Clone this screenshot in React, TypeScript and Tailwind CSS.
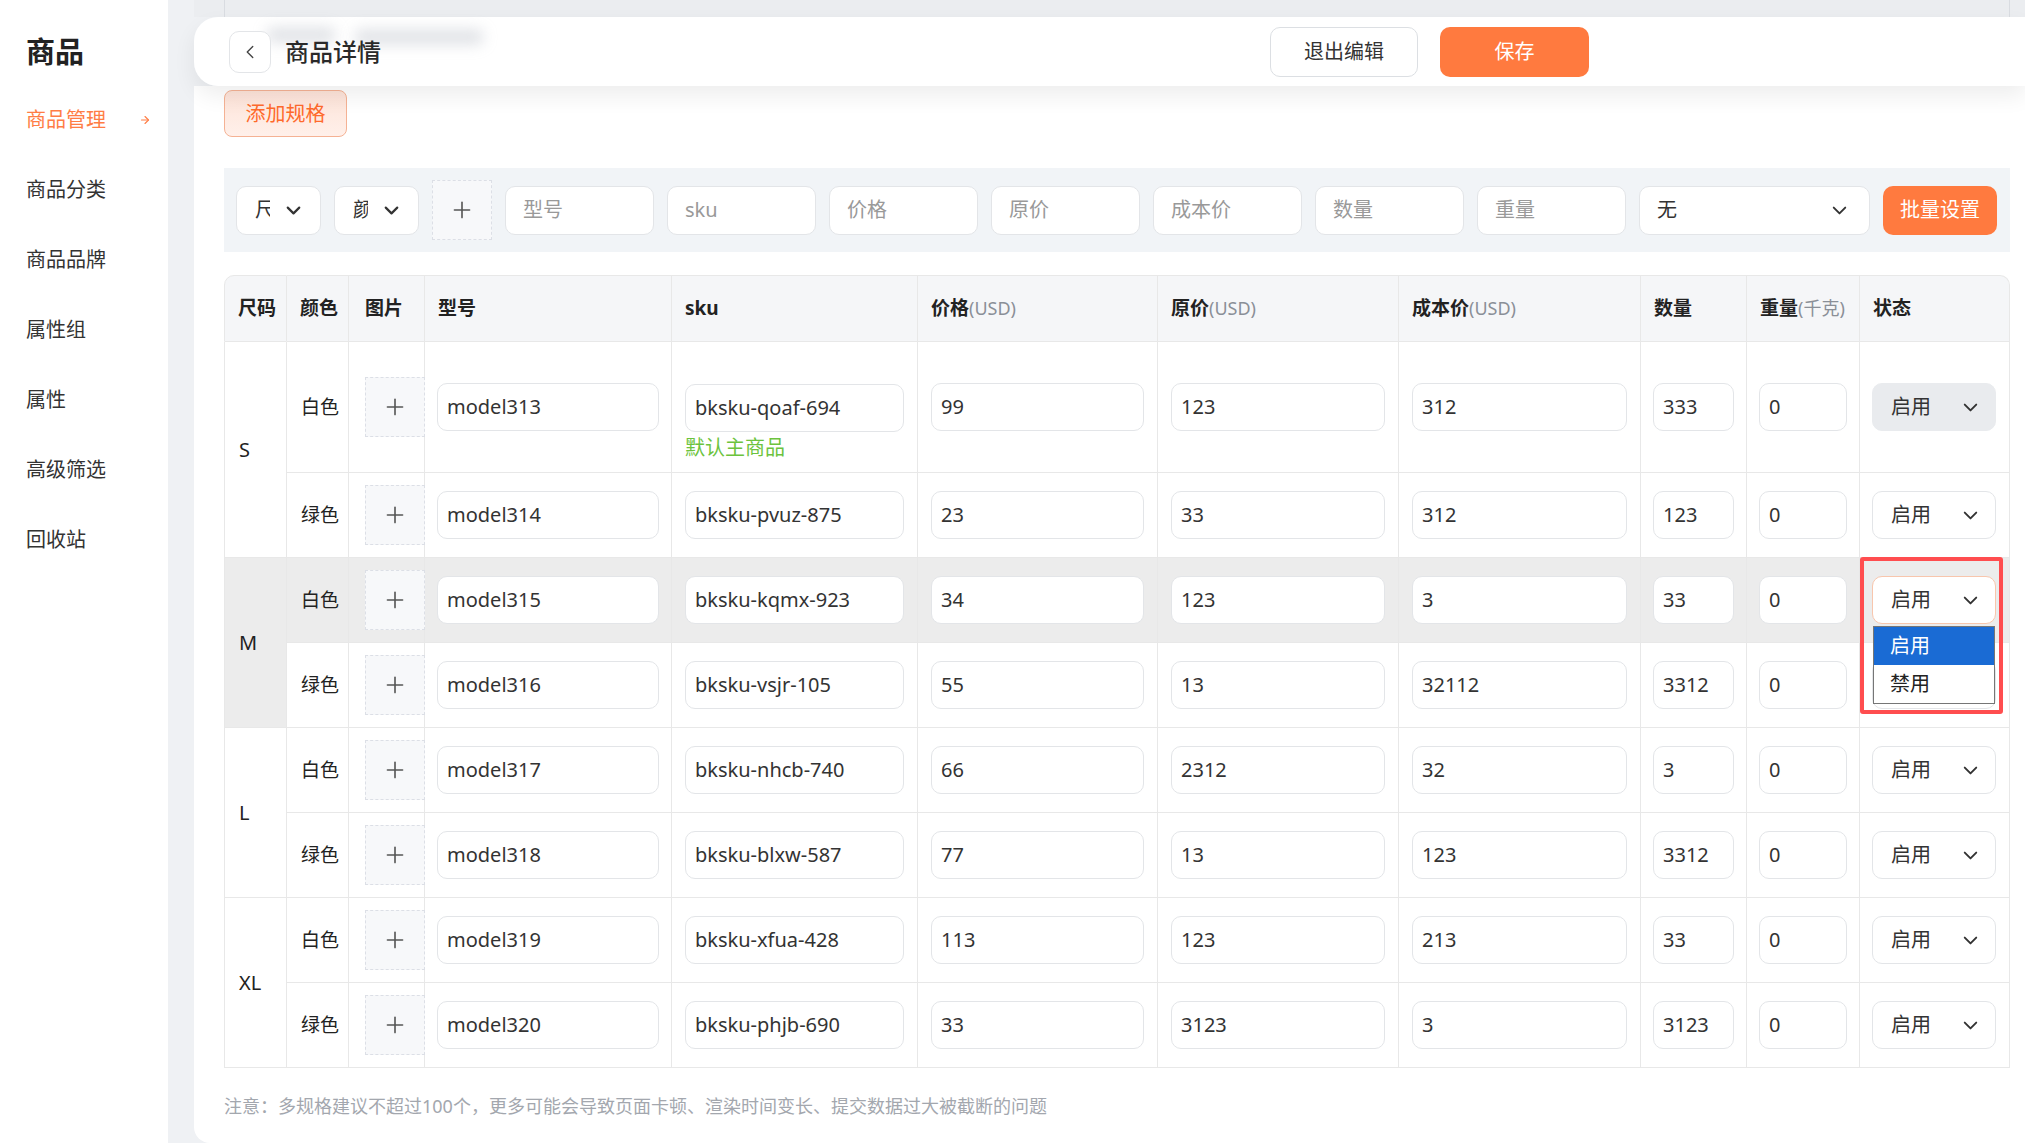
import React from 'react';
import { ChevronDown, ChevronLeft, Plus, ArrowRight } from 'lucide-react';

const menu = ['商品管理', '商品分类', '商品品牌', '属性组', '属性', '高级筛选', '回收站'];

type Row = {
  size: string;
  color: string;
  model: string;
  sku: string;
  price: string;
  origin: string;
  cost: string;
  qty: string;
  weight: string;
};

const rows: Row[] = [
  { size: 'S', color: '白色', model: 'model313', sku: 'bksku-qoaf-694', price: '99', origin: '123', cost: '312', qty: '333', weight: '0' },
  { size: 'S', color: '绿色', model: 'model314', sku: 'bksku-pvuz-875', price: '23', origin: '33', cost: '312', qty: '123', weight: '0' },
  { size: 'M', color: '白色', model: 'model315', sku: 'bksku-kqmx-923', price: '34', origin: '123', cost: '3', qty: '33', weight: '0' },
  { size: 'M', color: '绿色', model: 'model316', sku: 'bksku-vsjr-105', price: '55', origin: '13', cost: '32112', qty: '3312', weight: '0' },
  { size: 'L', color: '白色', model: 'model317', sku: 'bksku-nhcb-740', price: '66', origin: '2312', cost: '32', qty: '3', weight: '0' },
  { size: 'L', color: '绿色', model: 'model318', sku: 'bksku-blxw-587', price: '77', origin: '13', cost: '123', qty: '3312', weight: '0' },
  { size: 'XL', color: '白色', model: 'model319', sku: 'bksku-xfua-428', price: '113', origin: '123', cost: '213', qty: '33', weight: '0' },
  { size: 'XL', color: '绿色', model: 'model320', sku: 'bksku-phjb-690', price: '33', origin: '3123', cost: '3', qty: '3123', weight: '0' },
];

const colWidths = ['w-[63px]', 'w-[62px]', 'w-[76px]', 'w-[247px]', 'w-[246px]', 'w-[240px]', 'w-[241px]', 'w-[242px]', 'w-[106px]', 'w-[113px]', 'w-[150px]'];

function Field({ value }: { value: string }) {
  return (
    <div className="h-[48px] rounded-[10px] border border-[#e3e5e8] bg-white flex items-center pl-[9px] text-[20px] text-[#333] whitespace-nowrap overflow-hidden">
      {value}
    </div>
  );
}

function FilterInput({ placeholder }: { placeholder: string }) {
  return (
    <div className="w-[149px] h-[49px] shrink-0 rounded-[10px] border border-[#e3e5e8] bg-white flex items-center pl-[17px] text-[20px] text-[#999]">
      {placeholder}
    </div>
  );
}

function Header({ label, unit }: { label: string; unit?: string }) {
  return (
    <span className="whitespace-nowrap">
      <span className="font-bold text-[#222]">{label}</span>
      {unit && <span className="font-normal text-[#8a8f97] text-[18px]">{unit}</span>}
    </span>
  );
}

export default function App() {
  const cell = 'border-r border-b border-[#e8e8e8] align-middle';

  return (
    <div className="w-[2025px] h-[1143px] overflow-hidden flex bg-[#eff1f4] font-['Noto_Sans','Noto_Sans_CJK_SC',sans-serif] text-[#333]">
      {/* Sidebar */}
      <aside className="w-[168px] shrink-0 bg-white flex flex-col">
        <div className="h-[85px] flex items-center pl-[26px] pt-[18px]">
          <span className="text-[29px] font-bold text-[#222]">商品</span>
        </div>
        {menu.map((m, i) => (
          <div key={m} className="h-[70px] flex items-center pl-[26px] pr-[16px] text-[20px]">
            <span className={i === 0 ? 'text-[#ff7d45]' : 'text-[#333]'}>{m}</span>
            {i === 0 && <ArrowRight size={12} strokeWidth={2.2} className="ml-auto mr-[1px] text-[#ff7d45]" />}
          </div>
        ))}
      </aside>

      {/* Main */}
      <main className="flex-1 ml-[26px] flex flex-col">
        <div className="h-[17px] shrink-0 bg-[#ebedf0] flex">
          <div className="ml-[30px] mr-[15px] flex-1 border-x border-[#d9dce1]" />
        </div>

        {/* Sticky header */}
        <header className="relative z-10 h-[69px] shrink-0 bg-white/95 rounded-l-[24px] shadow-[0_10px_22px_rgba(0,0,0,0.07)] flex items-center pl-[35px]">
          <div className="absolute left-[72px] top-[10px] w-[70px] h-[16px] rounded-full bg-[#9ca3af]/30 blur-[7px]" />
          <div className="absolute left-[160px] top-[12px] w-[130px] h-[16px] rounded-full bg-[#9ca3af]/30 blur-[7px]" />
          <button className="relative w-[42px] h-[42px] rounded-[10px] border border-[#e3e5e8] bg-white flex items-center justify-center">
            <ChevronLeft size={22} strokeWidth={1.5} className="text-[#444]" />
          </button>
          <h1 className="relative ml-[14px] text-[24px] font-medium text-[#2a2a2a]">商品详情</h1>
          <div className="flex-1" />
          <button className="w-[148px] h-[50px] rounded-[10px] border border-[#dcdfe3] bg-white text-[20px] text-[#333]">退出编辑</button>
          <button className="ml-[22px] w-[149px] h-[50px] rounded-[10px] bg-[#ff7a3f] text-[20px] text-white">保存</button>
          <div className="w-[436px] shrink-0" />
        </header>

        {/* Content */}
        <section className="flex-1 bg-white rounded-bl-[16px] pl-[30px] pr-[15px]">
          <button className="mt-[4px] w-[123px] h-[47px] rounded-[8px] border border-[#f5b294] bg-gradient-to-b from-[#fde3d8] to-[#fff0ea] text-[20px] text-[#ff6a2c]">
            添加规格
          </button>

          {/* Batch bar */}
          <div className="mt-[31px] h-[84px] bg-[#f1f4f7] flex items-center pl-[12px] gap-[13px]">
            <div className="w-[85px] h-[49px] shrink-0 rounded-[10px] border border-[#e3e5e8] bg-white flex items-center pl-[18px]">
              <span className="w-[15px] overflow-hidden whitespace-nowrap text-[20px] text-[#333]">尺码</span>
              <ChevronDown size={23} strokeWidth={2.3} className="ml-[12px] text-[#333]" />
            </div>
            <div className="w-[85px] h-[49px] shrink-0 rounded-[10px] border border-[#e3e5e8] bg-white flex items-center pl-[18px]">
              <span className="w-[15px] overflow-hidden whitespace-nowrap text-[20px] text-[#333]">颜色</span>
              <ChevronDown size={23} strokeWidth={2.3} className="ml-[12px] text-[#333]" />
            </div>
            <div className="w-[60px] h-[60px] shrink-0 border border-dashed border-[#dcdfe6] bg-[#f7f8fa] flex items-center justify-center">
              <Plus size={26} strokeWidth={1.5} className="text-[#555]" />
            </div>
            {['型号', 'sku', '价格', '原价', '成本价', '数量', '重量'].map((p) => (
              <FilterInput key={p} placeholder={p} />
            ))}
            <div className="w-[231px] h-[49px] shrink-0 rounded-[10px] border border-[#e3e5e8] bg-white flex items-center pl-[17px] pr-[18px] text-[20px] text-[#333]">
              <span>无</span>
              <ChevronDown size={23} strokeWidth={2} className="ml-auto text-[#333]" />
            </div>
            <button className="w-[114px] h-[49px] shrink-0 rounded-[10px] bg-[#ff7a3f] text-[20px] text-white">批量设置</button>
          </div>

          {/* Spec table */}
          <table className="mt-[23px] w-[1786px] table-fixed border-separate border-spacing-0 text-[19px]">
            <colgroup>
              {colWidths.map((w, i) => (
                <col key={i} className={w} />
              ))}
            </colgroup>
            <thead>
              <tr className="h-[67px]">
                {[
                  { l: '尺码' },
                  { l: '颜色' },
                  { l: '图片' },
                  { l: '型号' },
                  { l: 'sku' },
                  { l: '价格', u: '(USD)' },
                  { l: '原价', u: '(USD)' },
                  { l: '成本价', u: '(USD)' },
                  { l: '数量' },
                  { l: '重量', u: '(千克)' },
                  { l: '状态' },
                ].map((h, i) => (
                  <th
                    key={h.l}
                    className={`bg-[#f5f6f8] border-t border-r border-b border-[#e8e8e8] text-left font-normal ${i === 2 ? 'pl-[16px]' : 'pl-[13px]'} ${i === 0 ? 'border-l rounded-tl-[10px]' : ''} ${i === 10 ? 'rounded-tr-[10px]' : ''}`}
                  >
                    <Header label={h.l} unit={h.u} />
                  </th>
                ))}
              </tr>
            </thead>
            <tbody>
              {rows.map((r, i) => {
                const hover = i === 2;
                const bg = hover ? 'bg-[#ececec]' : 'bg-white';
                return (
                  <tr key={r.model} className={i === 0 ? 'h-[131px]' : 'h-[85px]'}>
                    {i % 2 === 0 && (
                      <td rowSpan={2} className={`${cell} ${bg} border-l pl-[14px] text-[20px] text-[#222]`}>
                        {r.size}
                      </td>
                    )}
                    <td className={`${cell} ${bg} pl-[14px] text-[#222]`}>{r.color}</td>
                    <td className={`${cell} ${bg} pl-[16px]`}>
                      <div className="w-[60px] h-[60px] border border-dashed border-[#dcdfe6] bg-[#f7f8fa] flex items-center justify-center">
                        <Plus size={26} strokeWidth={1.5} className="text-[#555]" />
                      </div>
                    </td>
                    <td className={`${cell} ${bg} px-[12px]`}>
                      <Field value={r.model} />
                    </td>
                    <td className={`${cell} ${bg} px-[13px]`}>
                      {i === 0 ? (
                        <div className="pt-[30px] flex flex-col">
                          <Field value={r.sku} />
                          <span className="mt-[4px] leading-[24px] text-[20px] text-[#6cc33d]">默认主商品</span>
                        </div>
                      ) : (
                        <Field value={r.sku} />
                      )}
                    </td>
                    <td className={`${cell} ${bg} px-[13px]`}>
                      <Field value={r.price} />
                    </td>
                    <td className={`${cell} ${bg} px-[13px]`}>
                      <Field value={r.origin} />
                    </td>
                    <td className={`${cell} ${bg} px-[13px]`}>
                      <Field value={r.cost} />
                    </td>
                    <td className={`${cell} ${bg} px-[12px]`}>
                      <Field value={r.qty} />
                    </td>
                    <td className={`${cell} ${bg} px-[12px]`}>
                      <Field value={r.weight} />
                    </td>
                    <td className={`${cell} ${bg} pl-[12px]`}>
                      <div className="relative w-[124px]">
                        <div
                          className={`h-[48px] rounded-[10px] border flex items-center justify-between pl-[18px] pr-[13px] text-[20px] text-[#333] ${
                            i === 0 ? 'bg-[#e9ebee] border-[#e9ebee]' : hover ? 'bg-white border-[#f8c6ad]' : 'bg-white border-[#e3e5e8]'
                          }`}
                        >
                          <span>启用</span>
                          <ChevronDown size={23} strokeWidth={2} className="text-[#333]" />
                        </div>
                        {hover && (
                          <>
                            {/* native option list */}
                            <div className="absolute left-[1px] top-[50px] z-20 w-[122px] border border-[#767676] bg-white text-[20px]">
                              <div className="h-[38px] bg-[#1a6bd4] text-white flex items-center pl-[16px]">启用</div>
                              <div className="h-[38px] text-[#222] flex items-center pl-[16px]">禁用</div>
                            </div>
                            {/* highlight frame */}
                            <div className="absolute -left-[12px] -top-[19px] z-30 w-[143px] h-[157px] rounded-[3px] border-[4px] border-[#ff4d4f]" />
                          </>
                        )}
                      </div>
                    </td>
                  </tr>
                );
              })}
            </tbody>
          </table>

          <p className="mt-[25px] text-[18px] leading-[26px] text-[#a3a7ae]">
            注意：多规格建议不超过100个，更多可能会导致页面卡顿、渲染时间变长、提交数据过大被截断的问题
          </p>
        </section>
      </main>
    </div>
  );
}
